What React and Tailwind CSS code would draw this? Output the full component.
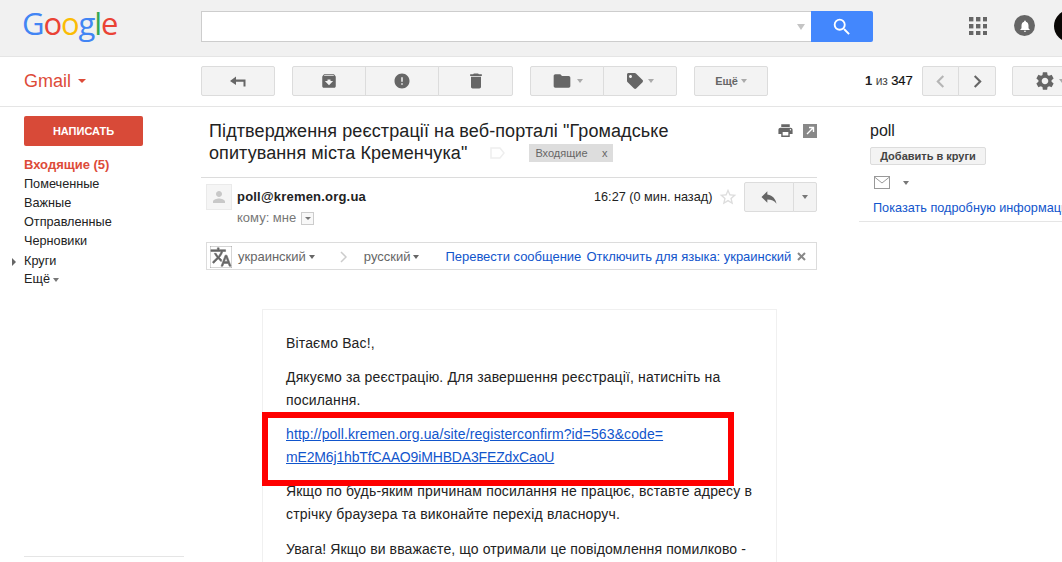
import React from "react";
import { MdArchive, MdError, MdDelete, MdFolder, MdSettings, MdNotifications, MdSearch, MdReply, MdPrint, MdTranslate, MdPerson, MdChevronLeft, MdChevronRight, MdStarBorder } from "react-icons/md";
import { FaTag } from "react-icons/fa";

const Caret = ({ c = "border-t-[#777]", w = "border-x-[3.5px] border-t-[4px]", cls = "" }) => (
  <span className={`inline-block shrink-0 w-0 h-0 border-x-transparent ${w} ${c} ${cls}`} />
);

const Btn = ({ className = "", children }) => (
  <div className={`h-[30px] shrink-0 flex items-center justify-center bg-[#f3f3f3] border border-[#dcdcdc] text-[#666] ${className}`}>{children}</div>
);

const ThinReply = () => (
  <svg width="16" height="11" viewBox="0 0 16 11" fill="#666"><path d="M0 5 L6 0.5 V3.5 H15.5 V10.5 H13.5 V5.8 H6 V9 Z" /></svg>
);

const navItems = ["Помеченные", "Важные", "Отправленные", "Черновики"];

export default function App() {
  return (
    <div className="relative w-[1062px] h-[562px] overflow-hidden bg-white text-[#222] text-[13px] font-['Liberation_Sans',Arial,sans-serif]">
      {/* Top bar */}
      <header className="h-[57px] bg-[#f1f1f1] border-b border-[#e5e5e5] flex items-start">
        <div className="w-[201px] shrink-0 pl-[22px] pt-[2px] text-[31px] leading-[42px] font-medium tracking-[-1.1px] font-['Open_Sans',sans-serif] select-none">
          <span className="text-[#4285f4]">G</span>
          <span className="text-[#ea4335]">o</span>
          <span className="text-[#fbbc05]">o</span>
          <span className="text-[#4285f4]">g</span>
          <span className="text-[#34a853]">l</span>
          <span className="text-[#ea4335]">e</span>
        </div>
        <div className="mt-[11px] w-[610px] h-[31px] shrink-0 bg-white border border-[#cdcdcd] border-r-0 flex items-center justify-end pr-[6px]">
          <Caret c="border-t-[#c4c4c4]" w="border-x-[4px] border-t-[6px]" />
        </div>
        <div className="mt-[11px] w-[62px] h-[31px] shrink-0 bg-[#4387fd] rounded-r-[2px] flex items-center justify-center text-white">
          <MdSearch size={22} />
        </div>
        <div className="ml-[96px] mt-[17px] shrink-0">
          <svg width="18" height="18" viewBox="0 0 18 18" fill="#666">
            {[0, 7, 14].map((y) => [0, 7, 14].map((x) => <rect key={`${x}-${y}`} x={x} y={y} width="4.4" height="4.4" />))}
          </svg>
        </div>
        <div className="ml-[27px] mt-[15px] w-[21px] h-[21px] shrink-0 rounded-full bg-[#666] flex items-center justify-center text-white">
          <MdNotifications size={14} />
        </div>
        <div className="ml-[19px] mt-[10px] w-[32px] h-[32px] shrink-0 rounded-full bg-[#0a0806]" />
      </header>

      {/* Toolbar */}
      <div className="h-[50px] border-b border-[#e5e5e5] flex items-start pt-[9px]">
        <div className="w-[201px] shrink-0 pl-[24px] pt-[2px] flex items-center text-[18px] leading-[26px] text-[#dd4b39]">
          Gmail
          <Caret c="border-t-[#dd4b39]" w="border-x-[4px] border-t-[4px]" cls="ml-[7px]" />
        </div>
        <Btn className="w-[74px] rounded-[2px]"><ThinReply /></Btn>
        <div className="ml-[17px] flex shrink-0">
          <Btn className="w-[74px] rounded-l-[2px]"><MdArchive size={18} /></Btn>
          <Btn className="w-[74px] -ml-px"><MdError size={18} /></Btn>
          <Btn className="w-[75px] -ml-px rounded-r-[2px]"><MdDelete size={20} /></Btn>
        </div>
        <div className="ml-[17px] flex shrink-0">
          <Btn className="w-[74px] rounded-l-[2px] gap-[5px]"><MdFolder size={20} /><Caret c="border-t-[#aaa]" /></Btn>
          <Btn className="w-[74px] -ml-px rounded-r-[2px] gap-[5px]"><FaTag size={16} /><Caret c="border-t-[#aaa]" /></Btn>
        </div>
        <Btn className="ml-[17px] w-[74px] rounded-[2px] gap-[3px] text-[11px] font-bold text-[#444]">Ещё<Caret c="border-t-[#aaa]" /></Btn>
        <div className="ml-[97px] w-[57px] h-[30px] shrink-0 flex items-center text-[13px] tracking-[-0.1px] text-[#222] whitespace-nowrap">
          <b>1</b>&nbsp;<span className="text-[#444] text-[12px]">из</span>&nbsp;<span className="text-[#111] [-webkit-text-stroke:0.2px_#111]">347</span>
        </div>
        <div className="flex shrink-0">
          <Btn className="w-[37px] rounded-l-[2px] text-[#b5b5b5]"><MdChevronLeft size={25} /></Btn>
          <Btn className="w-[38px] -ml-px rounded-r-[2px]"><MdChevronRight size={25} /></Btn>
        </div>
        <Btn className="ml-[16px] w-[74px] rounded-[2px] justify-start pl-[21px] gap-[3px]"><MdSettings size={22} /><Caret c="border-t-[#aaa]" /></Btn>
      </div>

      {/* Content */}
      <div className="flex items-start">
        {/* Sidebar */}
        <aside className="w-[201px] shrink-0 h-[455px] relative pl-[24px] pt-[9px]">
          <div className="w-[119px] h-[30px] bg-[#d84a38] rounded-[2px] flex items-center justify-center text-white text-[11px] font-bold">НАПИСАТЬ</div>
          <ul className="mt-[9px] text-[12.7px] leading-[19px]">
            <li className="font-bold text-[13px] text-[#dd4b39] mb-px">Входящие (5)</li>
            {navItems.map((t) => <li key={t}>{t}</li>)}
            <li className="relative mt-px">
              <span className="absolute left-[-12px] top-[6px] w-0 h-0 border-y-[4px] border-y-transparent border-l-[4px] border-l-[#666]" />
              Круги
            </li>
            <li className="flex items-center gap-[3px] -mt-px">Ещё<Caret c="border-t-[#777]" /></li>
          </ul>
          <div className="absolute left-[24px] top-[449px] w-[160px] border-t border-[#e5e5e5]" />
        </aside>

        {/* Message column */}
        <main className="w-[616px] shrink-0">
          <div className="h-[71px] pl-[8px] pt-[13px] flex items-start border-b border-[#dcdcdc]">
            <div className="w-[574px] text-[18px] leading-[22px] tracking-[0.1px] whitespace-nowrap">
              <div>Підтвердження реєстрації на веб-порталі "Громадське</div>
              <div className="flex items-center">
                опитування міста Кременчука"
                <svg className="ml-[23px]" width="15" height="12" viewBox="0 0 15 12" fill="none" stroke="#eee" strokeWidth="1.5"><path d="M1 1 H10 L14 6 L10 11 H1 Z" /></svg>
                <span className="ml-[24px] w-[84px] h-[18px] bg-[#ddd] flex items-center justify-between pl-[6px] pr-[6px] text-[11px] tracking-normal text-[#666]">Входящие <span className="text-[11px]">x</span></span>
              </div>
            </div>
            <div className="flex items-center gap-[9px] mt-[2px]">
              <MdPrint size={17} className="text-[#666]" />
              <span className="w-[14px] h-[14px] bg-[#888] flex items-center justify-center">
                <svg width="9" height="9" viewBox="0 0 9 9" fill="none" stroke="#fff" strokeWidth="1.4"><path d="M1 8 L7 2 M3 1.5 H7.5 V6" /></svg>
              </span>
            </div>
          </div>

          <div className="h-[64px] pl-[5px] pt-[4px] flex items-start">
            <div className="w-[26px] h-[26px] mt-[2px] shrink-0 bg-[#f5f5f5] border border-[#eaeaea] flex items-center justify-center text-[#c8c8c8]"><MdPerson size={18} /></div>
            <div className="ml-[5px] w-[357px] shrink-0">
              <div className="font-bold tracking-[0.2px] leading-[20px] mt-[5px]">poll@kremen.org.ua</div>
              <div className="flex items-center text-[13px] text-[#777] leading-[16px] mt-[3px]">
                кому: мне
                <span className="ml-[5px] w-[13px] h-[13px] border border-[#ccc] bg-[#f8f8f8] flex items-center justify-center"><Caret c="border-t-[#777]" w="border-x-[3px] border-t-[3px]" /></span>
              </div>
            </div>
            <div className="w-[124px] shrink-0 text-[12.7px] leading-[20px] mt-[5px] whitespace-nowrap">16:27 (0 мин. назад)</div>
            <MdStarBorder size={20} className="mt-[5px] shrink-0 text-[#ddd]" />
            <div className="ml-[6px] flex shrink-0">
              <Btn className="w-[50px] rounded-l-[2px]"><MdReply size={20} /></Btn>
              <Btn className="w-[24px] -ml-px rounded-r-[2px]"><Caret c="border-t-[#777]" /></Btn>
            </div>
          </div>

          <div className="ml-[5px] w-[611px] h-[28px] pt-px border border-[#dcdcdc] flex items-center text-[13px] whitespace-nowrap">
            <MdTranslate size={22} stroke="currentColor" strokeWidth="0.6" className="ml-[3px] shrink-0 text-[#666]" />
            <span className="ml-[6px] text-[#666]">украинский</span>
            <Caret c="border-t-[#666]" cls="ml-[3px]" />
            <svg className="ml-[25px] shrink-0" width="7" height="12" viewBox="0 0 7 12" fill="none" stroke="#ccc" strokeWidth="1.5"><path d="M1 1 L6 6 L1 11" /></svg>
            <span className="ml-[17px] text-[#666]">русский</span>
            <Caret c="border-t-[#666]" cls="ml-[3px]" />
            <span className="ml-[26px] w-[141px] shrink-0 tracking-[-0.03px] text-[#15c]">Перевести сообщение</span>
            <span className="text-[#15c] tracking-[-0.03px]">Отключить для языка: украинский</span>
            <svg className="ml-[6px] shrink-0" width="9" height="9" viewBox="0 0 9 9" stroke="#888" strokeWidth="2"><path d="M1 1 L8 8 M8 1 L1 8" /></svg>
          </div>

          <div className="ml-[61px] mt-[39px] w-[515px] h-[260px] border border-[#f0f0f0] pl-[23px] pr-[18px] pt-[22px] text-[14px] leading-[23px] tracking-[0.15px]">
            <p>Вітаємо Вас!,</p>
            <p className="mt-[11px]">Дякуємо за реєстрацію. Для завершення реєстрації, натисніть на посилання.</p>
            <p className="mt-[11px] text-[#15c] underline">
              <span className="tracking-[0.1px]">http://poll.kremen.org.ua/site/registerconfirm?id=563&amp;code=</span><br />
              <span className="tracking-[-0.15px]">mE2M6j1hbTfCAAO9iMHBDA3FEZdxCaoU</span>
            </p>
            <p className="mt-[11px] tracking-[0.18px]">Якщо по будь-яким причинам посилання не працює, вставте адресу в стрічку браузера та виконайте перехід власноруч.</p>
            <p className="mt-[12px] tracking-[0.11px]">Увага! Якщо ви вважаєте, що отримали це повідомлення помилково - проігноруйте його.</p>
          </div>
        </main>

        {/* Right panel */}
        <aside className="ml-[42px] w-[203px] shrink-0 h-[115px] border-b border-[#e5e5e5] relative overflow-hidden">
          <div className="pl-[11px] pt-[14px] text-[16px] leading-[20px]">poll</div>
          <div className="ml-[11px] mt-[6px] w-[116px] h-[18px] bg-[#f3f3f3] border border-[#dcdcdc] rounded-[2px] flex items-center justify-center text-[11px] font-bold text-[#444] whitespace-nowrap">Добавить в круги</div>
          <div className="ml-[15px] mt-[11px] flex items-center">
            <svg width="16" height="13" viewBox="0 0 16 13" fill="none" stroke="#999" strokeWidth="1"><rect x="0.5" y="0.5" width="15" height="12" /><path d="M0.5 1 L8 7 L15.5 1" /></svg>
            <Caret c="border-t-[#777]" cls="ml-[13px]" />
          </div>
          <div className="ml-[14px] mt-[11px] text-[12.7px] leading-[16px] text-[#15c] whitespace-nowrap">Показать подробную информацию</div>
        </aside>
      </div>

      {/* Annotation */}
      <div className="absolute left-[262px] top-[412px] w-[472px] h-[74px] border-[6px] border-[#f00]" />
    </div>
  );
}
